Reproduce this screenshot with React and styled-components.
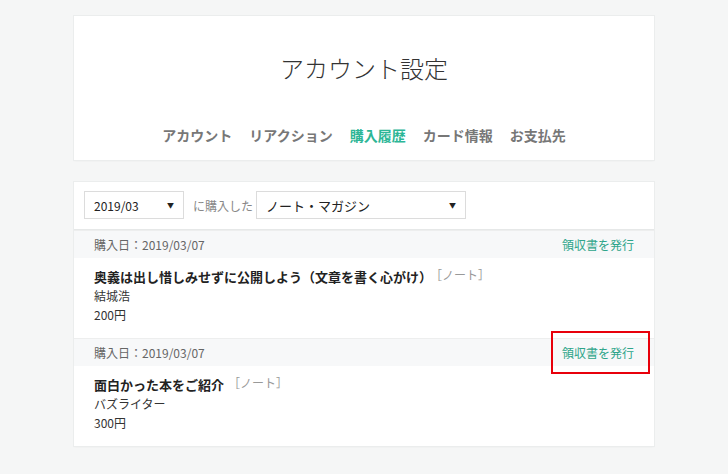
import styled, { createGlobalStyle } from "styled-components";

const GlobalStyle = createGlobalStyle`
  body {
    margin: 0;
    background: #f5f6f6;
    font-family: "Noto Sans CJK JP", "Noto Sans", sans-serif;
    color: #333;
  }
`;

const tabs = ["アカウント", "リアクション", "購入履歴", "カード情報", "お支払先"];

const purchases = [
  {
    id: 1,
    date: "2019/03/07",
    title: "奥義は出し惜しみせずに公開しよう（文章を書く心がけ）",
    kind: "ノート",
    author: "結城浩",
    price: "200円",
  },
  {
    id: 2,
    date: "2019/03/07",
    title: "面白かった本をご紹介",
    kind: "ノート",
    author: "バズライター",
    price: "300円",
    marked: true,
  },
];

export default function App() {
  return (
    <>
      <GlobalStyle />
      <Page>
        <HeaderCard>
          <Title>アカウント設定</Title>
          <Tabs>
            {tabs.map((t) => (
              <Tab key={t} $active={t === "購入履歴"}>
                {t}
              </Tab>
            ))}
          </Tabs>
        </HeaderCard>

        <ListCard>
          <Filter>
            <Select $width={100}>
              <span>2019/03</span>
              <Arrow>▼</Arrow>
            </Select>
            <FilterLabel>に購入した</FilterLabel>
            <Select $width={210} $big>
              <span>ノート・マガジン</span>
              <Arrow>▼</Arrow>
            </Select>
          </Filter>

          {purchases.map((p) => (
            <div key={p.id}>
              <DateRow>
                <span>購入日：{p.date}</span>
                <Receipt $marked={p.marked}>領収書を発行</Receipt>
              </DateRow>
              <Item>
                <ItemTitle>
                  {p.title}
                  <Kind>［{p.kind}］</Kind>
                </ItemTitle>
                <Line>{p.author}</Line>
                <Line>{p.price}</Line>
              </Item>
            </div>
          ))}
        </ListCard>
      </Page>
    </>
  );
}

const Page = styled.div`
  width: 580px;
  margin: 0 auto;
  padding: 16px 0 27px;
  display: flex;
  flex-direction: column;
  gap: 22px;
`;

const Card = styled.div`
  background: #fff;
  box-shadow: 0 0 0 1px #ebeded, 0 1px 2px rgba(0, 0, 0, 0.05);
`;

const HeaderCard = styled(Card)`
  height: 144px;
  display: flex;
  flex-direction: column;
  align-items: center;
  box-sizing: border-box;
  padding-top: 37px;
`;

const Title = styled.h1`
  margin: 0;
  font-size: 24px;
  font-weight: 300;
  line-height: 30px;
  color: #333;
`;

const Tabs = styled.nav`
  display: flex;
  gap: 17px;
  margin-top: 42px;
`;

const Tab = styled.span`
  font-size: 14px;
  font-weight: 700;
  line-height: 20px;
  color: ${({ $active }) => ($active ? "#2cb696" : "#777")};
`;

const ListCard = styled(Card)``;

const Filter = styled.div`
  display: flex;
  align-items: center;
  padding: 9px 10px 10px;
  border-bottom: 1px solid #e6e8e8;
`;

const Select = styled.div`
  width: ${({ $width }) => $width}px;
  height: 28px;
  box-sizing: border-box;
  border: 1px solid #dcdcdc;
  display: flex;
  align-items: center;
  justify-content: space-between;
  padding: 0 9px 0 9px;
  font-size: ${({ $big }) => ($big ? "13px" : "12px")};
  color: #222;
`;

const Arrow = styled.span`
  font-size: 7px;
  color: #222;
`;

const FilterLabel = styled.span`
  font-size: 12px;
  color: #888;
  margin: 0 3px 0 9px;
`;

const DateRow = styled.div`
  display: flex;
  justify-content: space-between;
  align-items: center;
  height: 27px;
  padding: 0 20px;
  background: #f7f8f9;
  font-size: 12px;
  color: #666;
  border-top: 1px solid #edeeee;
  div:first-child > & {
    border-top: none;
  }
`;

const Receipt = styled.a`
  position: relative;
  color: #2ea58a;
  font-size: 12px;
  cursor: pointer;
  ${({ $marked }) =>
    $marked &&
    `
    &::after {
      content: "";
      position: absolute;
      left: -11px;
      right: -16px;
      top: -13px;
      bottom: -13px;
      border: 2px solid #e8000b;
    }
  `}
`;

const Item = styled.div`
  padding: 9px 20px 14px;
  font-size: 12px;
  line-height: 19px;
  color: #333;
`;

const ItemTitle = styled.div`
  font-size: 13px;
  font-weight: 700;
  color: #222;
`;

const Kind = styled.span`
  font-weight: 400;
  font-size: 12px;
  color: #999;
  margin-left: 4px;
  position: relative;
  top: -2px;
`;

const Line = styled.div``;
